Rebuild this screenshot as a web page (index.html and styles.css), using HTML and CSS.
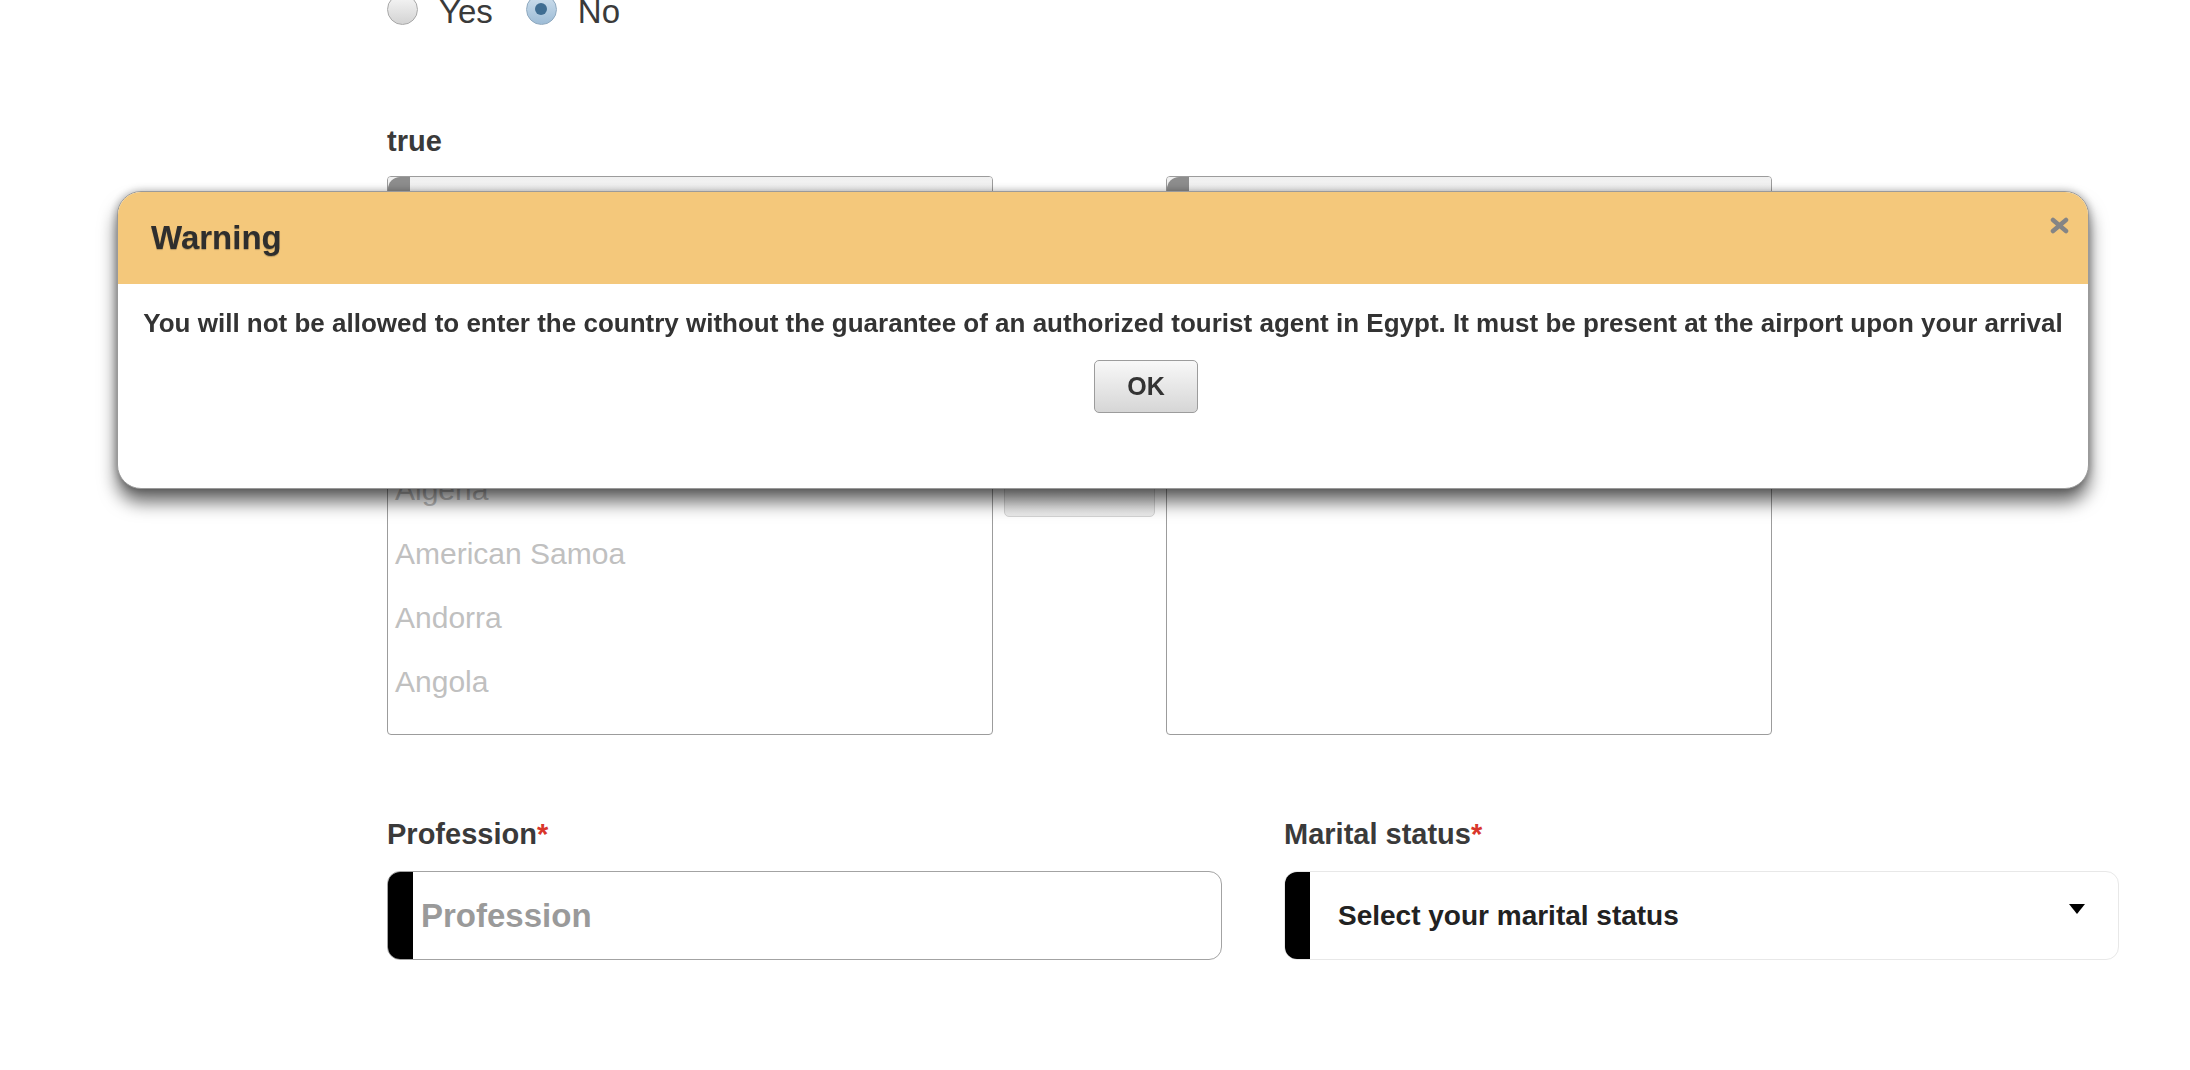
FILE: index.html
```html
<!DOCTYPE html>
<html lang="en">
<head>
<meta charset="utf-8">
<title>Visa form</title>
<link rel="stylesheet" href="styles.css">
</head>
<body>
<div class="form">
  <div class="radios">
    <label class="radio"><span class="dot"></span>Yes</label>
    <label class="radio"><span class="dot checked"></span>No</label>
  </div>

  <div class="field-label list-label">true</div>

  <div class="dual">
    <div class="listbox">
      <div class="filter"><span class="bar"></span></div>
      <ul class="items">
        <li>Afghanistan</li>
        <li>Åland Islands</li>
        <li>Albania</li>
        <li>Algeria</li>
        <li>American Samoa</li>
        <li>Andorra</li>
        <li>Angola</li>
      </ul>
    </div>
    <div class="mid">
      <button class="move" type="button" aria-label="Add"></button>
      <button class="move" type="button" aria-label="Remove"></button>
    </div>
    <div class="listbox">
      <div class="filter"><span class="bar"></span></div>
      <ul class="items"></ul>
    </div>
  </div>

  <div class="row">
    <div class="col">
      <div class="field-label">Profession<span class="req">*</span></div>
      <div class="input"><span class="bar"></span><span class="ph">Profession</span></div>
    </div>
    <div class="col">
      <div class="field-label">Marital status<span class="req">*</span></div>
      <div class="select"><span class="bar"></span><span class="sel-text">Select your marital status</span><span class="arrow"></span></div>
    </div>
  </div>
</div>

<div class="dialog">
  <div class="dialog-head">
    <span class="dialog-title">Warning</span>
    <svg class="close" width="21" height="17" viewBox="0 0 21 17"><path d="M4 3 L17 14 M17 3 L4 14" stroke="#858585" stroke-width="4.5" stroke-linecap="round"/></svg>
  </div>
  <div class="dialog-body">
    <p class="msg">You will not be allowed to enter the country without the guarantee of an authorized tourist agent in Egypt. It must be present at the airport upon your arrival</p>
    <button class="ok" type="button">OK</button>
  </div>
</div>
</body>
</html>
```

FILE: styles.css
```css
html, body {
  margin: 0;
  padding: 0;
  background: #fff;
  overflow: hidden;
  font-family: "Liberation Sans", Arial, sans-serif;
  color: #333;
}

.form {
  margin-left: 387px;
  width: 1732px;
  margin-top: -8px;
}

/* radios */
.radios {
  display: flex;
  align-items: center;
  height: 40px;
  font-size: 33px;
  color: #3a3a3a;
}
.radio {
  display: flex;
  align-items: center;
  margin-right: 33px;
}
.dot {
  width: 31px;
  height: 31px;
  border-radius: 50%;
  border: 1px solid #a8a8a8;
  background: linear-gradient(#f7f7f7, #d3d3d3);
  margin-right: 21px;
  position: relative;
  top: -3px;
  box-sizing: border-box;
}
.dot.checked {
  border-color: #8fa9bf;
  background: linear-gradient(#cfe0ee, #9dbcd6);
}
.dot.checked::after {
  content: "";
  position: absolute;
  left: 8.5px;
  top: 8.5px;
  width: 12px;
  height: 12px;
  border-radius: 50%;
  background: #3f6d92;
}

/* labels */
.field-label {
  font-size: 29px;
  line-height: 34px;
  font-weight: bold;
  color: #3a3a3a;
}
.list-label {
  margin-top: 92px;
}
.req {
  color: #d9362b;
}

/* dual list */
.dual {
  display: flex;
  margin-top: 18px;
  width: 1385px;
}
.listbox {
  width: 606px;
  height: 559px;
  box-sizing: border-box;
  border: 1.5px solid #9c9c9c;
  border-radius: 4px;
  overflow: hidden;
  background: #fff;
}
.filter {
  height: 56px;
  display: flex;
  background: linear-gradient(#f0f0f0, #fafafa);
  border-bottom: 1px solid #e4e4e4;
}
.filter .bar {
  width: 22px;
  background: #8d8d8d;
  border-top-left-radius: 12px;
}
.items {
  list-style: none;
  margin: 0;
  padding: 32px 0 0 7px;
}
.items li {
  height: 64px;
  line-height: 64px;
  font-size: 30px;
  color: #c0c0c0;
  white-space: nowrap;
}
.mid {
  width: 174px;
  box-sizing: border-box;
  padding: 225px 11px 0;
  display: flex;
  flex-direction: column;
  gap: 12px;
}
.move {
  height: 52px;
  border: 1px solid #d4d4d4;
  border-radius: 5px;
  background: linear-gradient(#f8f8f8, #ececec);
}

/* bottom row */
.row {
  display: flex;
  gap: 62px;
  margin-top: 82px;
}
.col {
  width: 835px;
}
.input, .select {
  margin-top: 20px;
  height: 89px;
  box-sizing: border-box;
  border-radius: 13px;
  display: flex;
  align-items: center;
  overflow: hidden;
}
.input {
  border: 1.5px solid #a3a3a3;
}
.select {
  border: 1.5px solid #e8e8e8;
}
.input .bar, .select .bar {
  align-self: stretch;
  width: 25px;
  background: #000;
  flex: none;
}
.ph {
  margin-left: 8px;
  font-size: 33px;
  font-weight: bold;
  color: #9a9a9a;
}
.sel-text {
  margin-left: 28px;
  font-size: 28px;
  font-weight: bold;
  color: #222;
  flex: 1;
}
.arrow {
  width: 0;
  height: 0;
  border-left: 8px solid transparent;
  border-right: 8px solid transparent;
  border-top: 10px solid #000;
  margin-right: 33px;
  margin-top: -14px;
}

/* dialog */
.dialog {
  position: fixed;
  left: 117px;
  top: 191px;
  width: 1972px;
  height: 298px;
  box-sizing: border-box;
  border: 1.5px solid #9a9a9a;
  border-radius: 24px;
  background: #fff;
  overflow: hidden;
  box-shadow: 0 13px 18px rgba(0, 0, 0, 0.6), 0 0 9px rgba(0, 0, 0, 0.3);
}
.dialog-head {
  height: 92px;
  background: #f4c87b;
  display: flex;
  align-items: center;
  padding-left: 33px;
  position: relative;
}
.dialog-title {
  font-size: 33px;
  font-weight: bold;
  color: #2e2e2e;
  text-shadow: 0 1px 1px rgba(0, 0, 0, 0.25);
}
.close {
  position: absolute;
  right: 18px;
  top: 25px;
}
.dialog-body {
  text-align: center;
}
.msg {
  margin: 0;
  padding-top: 24px;
  font-size: 26px;
  line-height: 30px;
  font-weight: bold;
  color: #333;
  white-space: nowrap;
}
.ok {
  margin-top: 22px;
  margin-left: 86px;
  width: 104px;
  height: 53px;
  border: 1.5px solid #9c9c9c;
  border-radius: 5px;
  background: linear-gradient(#f8f8f8, #d6d6d6);
  font-family: inherit;
  font-size: 25px;
  font-weight: bold;
  color: #333;
}
```
